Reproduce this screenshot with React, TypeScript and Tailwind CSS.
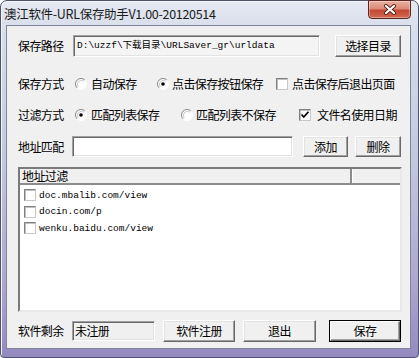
import React from "react";

function Btn({ children, className = "", def = false }: { children: React.ReactNode; className?: string; def?: boolean }) {
  if (def) {
    return (
      <div className={`h-full border border-black ${className}`}>
        <div className="h-full w-full flex items-center justify-center bg-[#f0f0f0] border border-t-white border-l-white border-r-[#696969] border-b-[#696969] shadow-[inset_-1px_-1px_0_#a0a0a0]">
          {children}
        </div>
      </div>
    );
  }
  return (
    <div
      className={`h-full flex items-center justify-center bg-[#f0f0f0] border border-t-white border-l-white border-r-[#696969] border-b-[#696969] shadow-[inset_-1px_-1px_0_#a0a0a0,inset_1px_1px_0_#e3e3e3] ${className}`}
    >
      {children}
    </div>
  );
}

function Radio({ checked = false }: { checked?: boolean }) {
  return (
    <svg width="12" height="12" viewBox="0 0 12 12" className="shrink-0">
      <circle cx="6" cy="6" r="5" fill="#ffffff" />
      <path d="M9.9 2.1 A5.5 5.5 0 0 0 2.1 9.9" fill="none" stroke="#8a8a8a" strokeWidth="1" />
      <path d="M2.1 9.9 A5.5 5.5 0 0 0 9.9 2.1" fill="none" stroke="#ffffff" strokeWidth="1" />
      <path d="M8.8 3.2 A4 4 0 0 0 3.2 8.8" fill="none" stroke="#c8c8c8" strokeWidth="1" />
      {checked && <circle cx="6" cy="6" r="1.8" fill="#000000" />}
    </svg>
  );
}

function Check({ checked = false }: { checked?: boolean }) {
  return (
    <div className="w-[12px] h-[12px] shrink-0 bg-white border border-t-[#808080] border-l-[#808080] border-r-[#c8c8c8] border-b-[#c8c8c8] shadow-[inset_1px_1px_0_#c0c0c0] flex items-center justify-center">
      {checked && (
        <svg width="10" height="10" viewBox="0 0 10 10">
          <polyline points="1.5,4.5 3.8,7 8.5,1.8" fill="none" stroke="#000" strokeWidth="1.7" />
        </svg>
      )}
    </div>
  );
}

const sunken =
  "border border-t-[#a0a0a0] border-l-[#a0a0a0] border-b-white border-r-white shadow-[inset_1px_1px_0_#696969,inset_-1px_-1px_0_#e3e3e3]";

const mono = "font-['Liberation_Mono','Noto_Sans_CJK_SC',monospace] text-[9.5px]";

export default function App() {
  return (
    <div className="w-[419px] h-[358px] bg-white font-['Noto_Sans_CJK_SC','Noto_Sans',sans-serif] text-[12px] tracking-[-0.6px] text-black leading-none">
      <div className="w-[419px] h-[358px] relative rounded-t-[7px] rounded-b-[4px] border border-[#4f536a] bg-[linear-gradient(180deg,#e4e9f2_0%,#d8deea_8%,#c3c7df_45%,#ada5cf_80%,#958ac0_100%)] flex flex-col shadow-[inset_1px_1px_0_#f4f6fa]">
        {/* title bar */}
        <div className="h-[24px] shrink-0 flex items-center pl-[3px] pt-[3px] text-[12.5px] tracking-[-0.3px] text-[#1a1a1a]">
          澳江软件-URL保存助手V1.00-20120514
        </div>
        {/* close button */}
        <div className="absolute top-[-1px] right-[7px] w-[43px] h-[19px] rounded-b-[4px] border border-[#5e241c] bg-[linear-gradient(180deg,#eab0a2_0%,#dc8a78_45%,#c44a34_55%,#cf6a52_100%)] shadow-[inset_0_0_0_1px_rgba(255,255,255,0.35)] flex items-center justify-center">
          <svg width="14" height="11" viewBox="0 0 14 11">
            <path d="M3 2 L11 9 M11 2 L3 9" stroke="#5a2018" strokeWidth="4" strokeLinecap="round" />
            <path d="M3 2 L11 9 M11 2 L3 9" stroke="#ffffff" strokeWidth="2.2" strokeLinecap="round" />
          </svg>
        </div>
        {/* client area */}
        <div className="ml-[5px] w-[405px] h-[324px] border border-[#7f869a] bg-[#f0f0f0] flex flex-col pl-[11px] pr-[8px]">
          {/* row 1 */}
          <div className="mt-[9px] h-[22px] flex items-center">
            <div className="w-[55px]">保存路径</div>
            <div className={`w-[247px] h-full ${sunken} bg-[#f4f4f4] flex items-center pl-[3px] ${mono} tracking-normal`}>
              D:\uzzf\下载目录\URLSaver_gr\urldata
            </div>
            <Btn className="ml-[15px] w-[66px]">选择目录</Btn>
          </div>
          {/* row 2 */}
          <div className="mt-[17px] h-[20px] flex items-center">
            <div className="w-[57px]">保存方式</div>
            <div className="w-[82px] flex items-center">
              <Radio />
              <span className="ml-[4px]">自动保存</span>
            </div>
            <div className="w-[119px] flex items-center">
              <Radio checked />
              <span className="ml-[3px]">点击保存按钮保存</span>
            </div>
            <div className="flex items-center">
              <Check />
              <span className="ml-[4px]">点击保存后退出页面</span>
            </div>
          </div>
          {/* row 3 */}
          <div className="mt-[11px] h-[20px] flex items-center">
            <div className="w-[57px]">过滤方式</div>
            <div className="w-[106px] flex items-center">
              <Radio checked />
              <span className="ml-[4px]">匹配列表保存</span>
            </div>
            <div className="w-[118px] flex items-center">
              <Radio />
              <span className="ml-[3px]">匹配列表不保存</span>
            </div>
            <div className="flex items-center">
              <Check checked />
              <span className="ml-[6px]">文件名使用日期</span>
            </div>
          </div>
          {/* row 4 */}
          <div className="mt-[11px] h-[21px] flex items-center">
            <div className="w-[54px]">地址匹配</div>
            <div className={`w-[221px] h-full ${sunken} bg-white`} />
            <Btn className="ml-[10px] w-[45px]">添加</Btn>
            <Btn className="ml-[7px] w-[46px]">删除</Btn>
          </div>
          {/* list */}
          <div className="mt-[10px] h-[145px] border-2 border-t-[#7a7a7a] border-l-[#7a7a7a] border-r-[#e8e8e8] border-b-[#e8e8e8] bg-white flex flex-col">
            <div className="h-[16px] shrink-0 flex bg-[#f0f0f0] border-b-2 border-[#8c8c8c]">
              <div className="w-[332px] h-full flex items-center pl-[2px] border-r-2 border-r-[#8c8c8c]">地址过滤</div>
              <div className="flex-1 border-l border-white" />
            </div>
            <div className="mt-[2px] flex flex-col">
              {["doc.mbalib.com/view", "docin.com/p", "wenku.baidu.com/view"].map((t) => (
                <div key={t} className="h-[16.5px] flex items-center pl-[4px]">
                  <Check />
                  <span className={`ml-[3px] ${mono} tracking-normal`}>{t}</span>
                </div>
              ))}
            </div>
          </div>
          {/* bottom */}
          <div className="mt-[8px] h-[22px] flex items-center">
            <div className="w-[54px]">软件剩余</div>
            <div className={`w-[83px] h-[20px] ${sunken} bg-[#f0f0f0] flex items-center pl-[2px]`}>未注册</div>
            <Btn className="ml-[8px] w-[72px]">软件注册</Btn>
            <Btn className="ml-[8px] w-[73px]">退出</Btn>
            <Btn def className="ml-[13px] w-[72px]">保存</Btn>
          </div>
        </div>
      </div>
    </div>
  );
}
